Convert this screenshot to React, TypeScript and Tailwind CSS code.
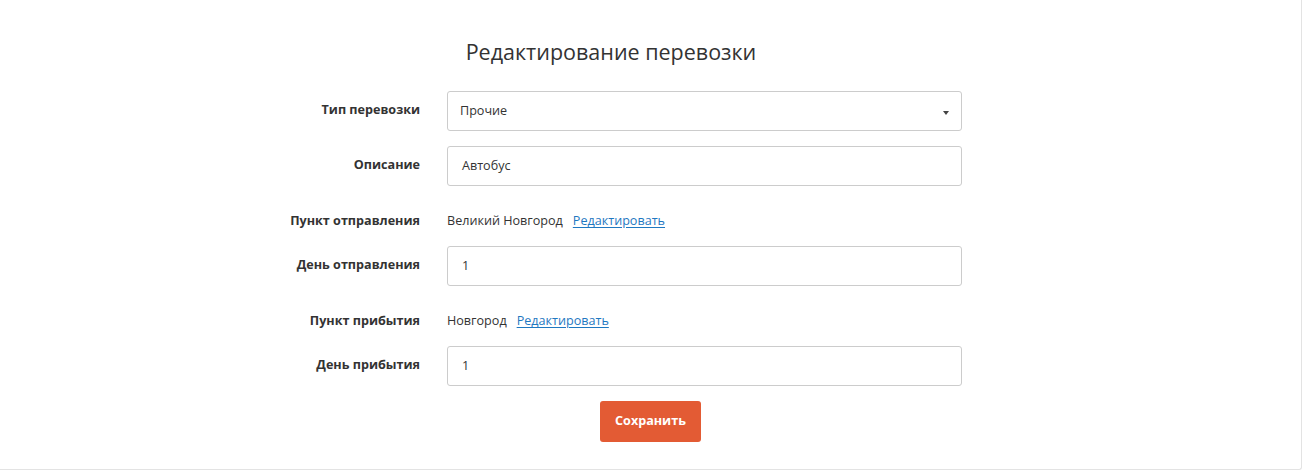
import React from "react";

const font = { fontFamily: '"Open Sans", "Liberation Sans", sans-serif' };

function Label({ children }: { children: React.ReactNode }) {
  return (
    <div className="w-[160px] shrink-0 text-right text-[12.6px] font-bold text-[#333]">
      {children}
    </div>
  );
}

function InputRow({ label, value, select }: { label: string; value: string; select?: boolean }) {
  return (
    <div className="flex items-center gap-[27px]">
      <Label>
        <div className="-mt-[2px]">{label}</div>
      </Label>
      <div className="relative flex h-[40px] w-[515px] items-center rounded-[3px] border border-[#cccccc] bg-white text-[12.6px] text-[#333]">
        <span className={select ? "pl-[12px]" : "pl-[14px]"}>{value}</span>
        {select && (
          <span className="absolute right-[12px] top-[19px] h-0 w-0 border-x-[3.5px] border-t-[4px] border-x-transparent border-t-[#444]" />
        )}
      </div>
    </div>
  );
}

function TextRow({ label, value }: { label: string; value: string }) {
  return (
    <div className="flex h-[30px] items-end gap-[27px]">
      <Label>{label}</Label>
      <div className="flex gap-[10px] text-[12.6px] text-[#333]">
        <span>{value}</span>
        <a href="#" className="text-[#1f78c1] underline underline-offset-[2px]">
          Редактировать
        </a>
      </div>
    </div>
  );
}

export default function App() {
  return (
    <div className="min-h-[471px] w-[1304px] bg-white" style={font}>
      <div className="h-[470px] w-[1302px] rounded-br-[3px] border-r border-b border-[#e3e3e3] bg-white">
        <div className="pl-[260px] pt-[36px]">
          <div className="w-[702px]">
            <h1 className="text-center text-[21.5px] leading-[32px] font-normal text-[#333]">
              Редактирование перевозки
            </h1>
            <div className="mt-[23px] flex flex-col gap-[15px]">
              <InputRow label="Тип перевозки" value="Прочие" select />
              <InputRow label="Описание" value="Автобус" />
              <TextRow label="Пункт отправления" value="Великий Новгород" />
              <InputRow label="День отправления" value="1" />
              <TextRow label="Пункт прибытия" value="Новгород" />
              <InputRow label="День прибытия" value="1" />
            </div>
          </div>
        </div>
        <div className="mt-[15px] flex justify-center">
          <button className="h-[41px] w-[101px] rounded-[3px] bg-[#e35b34] text-[12.6px] font-bold text-white">
            Сохранить
          </button>
        </div>
      </div>
    </div>
  );
}
